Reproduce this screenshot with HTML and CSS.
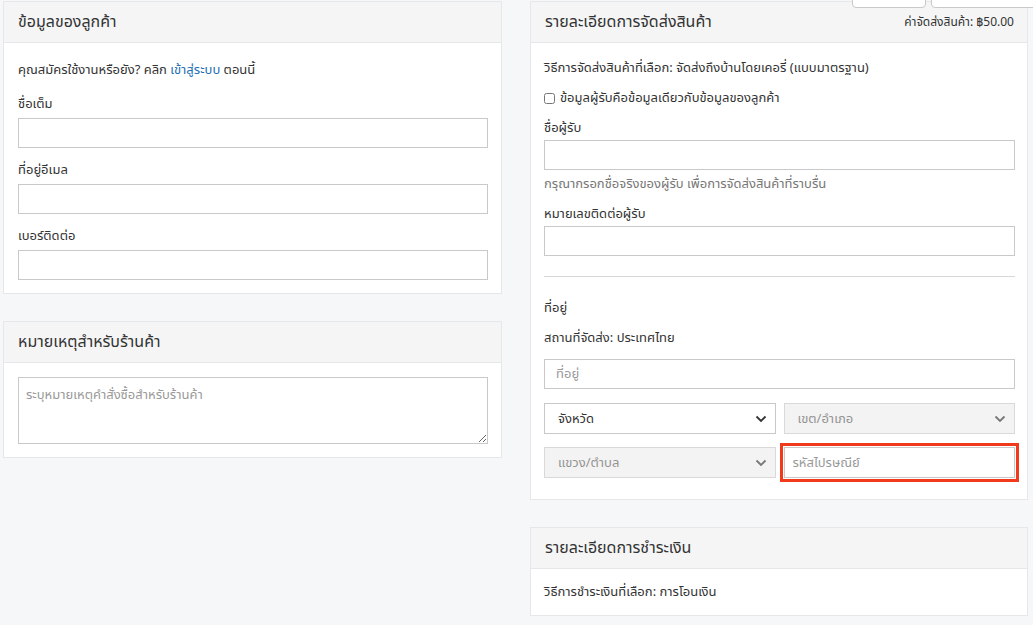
FILE: index.html
```html
<!DOCTYPE html>
<html lang="th">
<head>
    <meta charset="UTF-8">
    <meta name="viewport" content="width=device-width, initial-scale=1.0">
    <title>ข้อมูลการสั่งซื้อ</title>
    <link rel="stylesheet" href="styles.css">
</head>
<body>

    <!-- ปุ่มด้านบน (ถูกตัดขอบ) -->
    <div class="top-btns">
        <button class="top-btn top-btn-a" type="button" aria-label="ย้อนกลับ"></button>
        <button class="top-btn top-btn-b" type="button" aria-label="ดำเนินการต่อ"></button>
    </div>

    <div class="page">

        <!-- คอลัมน์ซ้าย -->
        <div class="col col-l">
            <div class="card">
                <div class="card-head">
                    <h3>ข้อมูลของลูกค้า</h3>
                </div>
                <div class="card-body">
                    <p class="line">คุณสมัครใช้งานหรือยัง? คลิก <a href="#">เข้าสู่ระบบ</a> ตอนนี้</p>

                    <div class="group">
                        <label class="lbl">ชื่อเต็ม</label>
                        <input class="txt" type="text">
                    </div>
                    <div class="group">
                        <label class="lbl">ที่อยู่อีเมล</label>
                        <input class="txt" type="text">
                    </div>
                    <div class="group last">
                        <label class="lbl">เบอร์ติดต่อ</label>
                        <input class="txt" type="text">
                    </div>
                </div>
            </div>

            <div class="card">
                <div class="card-head">
                    <h3>หมายเหตุสำหรับร้านค้า</h3>
                </div>
                <div class="card-body body-note">
                    <textarea class="note" placeholder="ระบุหมายเหตุคำสั่งซื้อสำหรับร้านค้า"></textarea>
                </div>
            </div>
        </div>

        <!-- คอลัมน์ขวา -->
        <div class="col col-r">
            <div class="card">
                <div class="card-head">
                    <h3>รายละเอียดการจัดส่งสินค้า</h3>
                    <span class="fee">ค่าจัดส่งสินค้า: ฿50.00</span>
                </div>
                <div class="card-body body-r">
                    <p class="line">วิธีการจัดส่งสินค้าที่เลือก: จัดส่งถึงบ้านโดยเคอรี่ (แบบมาตรฐาน)</p>

                    <label class="check">
                        <input type="checkbox"> ข้อมูลผู้รับคือข้อมูลเดียวกับข้อมูลของลูกค้า
                    </label>

                    <div class="group-r">
                        <label class="lbl">ชื่อผู้รับ</label>
                        <input class="txt" type="text">
                        <p class="help">กรุณากรอกชื่อจริงของผู้รับ เพื่อการจัดส่งสินค้าที่ราบรื่น</p>
                    </div>

                    <div class="group-r">
                        <label class="lbl">หมายเลขติดต่อผู้รับ</label>
                        <input class="txt" type="text">
                    </div>

                    <hr class="sep">

                    <p class="line addr-title">ที่อยู่</p>
                    <p class="line">สถานที่จัดส่ง: ประเทศไทย</p>

                    <input class="txt addr" type="text" placeholder="ที่อยู่">

                    <div class="grid2">
                        <div class="sel-wrap">
                            <select class="sel">
                                <option>จังหวัด</option>
                            </select>
                            <svg class="chev" width="12" height="8" viewBox="0 0 12 8"><path d="M1.5 1.5 L6 6 L10.5 1.5" fill="none" stroke="#333" stroke-width="1.8"/></svg>
                        </div>
                        <div class="sel-wrap">
                            <select class="sel" disabled>
                                <option>เขต/อำเภอ</option>
                            </select>
                            <svg class="chev" width="12" height="8" viewBox="0 0 12 8"><path d="M1.5 1.5 L6 6 L10.5 1.5" fill="none" stroke="#777" stroke-width="1.8"/></svg>
                        </div>
                        <div class="sel-wrap">
                            <select class="sel" disabled>
                                <option>แขวง/ตำบล</option>
                            </select>
                            <svg class="chev" width="12" height="8" viewBox="0 0 12 8"><path d="M1.5 1.5 L6 6 L10.5 1.5" fill="none" stroke="#777" stroke-width="1.8"/></svg>
                        </div>
                        <input class="txt zip" type="text" placeholder="รหัสไปรษณีย์">
                    </div>
                </div>
            </div>

            <div class="card">
                <div class="card-head">
                    <h3>รายละเอียดการชำระเงิน</h3>
                </div>
                <div class="card-body body-pay">
                    <p class="line">วิธีการชำระเงินที่เลือก: การโอนเงิน</p>
                </div>
            </div>
        </div>

    </div>

</body>
</html>
```

FILE: styles.css
```css
/*初始化*/
*{
    box-sizing: border-box;
}
body{
    margin: 0;
    background-color: #f6f7f9;
    color: #333;
    font-family: "Noto Sans Thai", "Noto Sans", "DejaVu Sans", sans-serif;
    font-size: 13px;
}
p,h3{
    margin: 0;
}

/*1.两栏*/
.page{
    display: flex;
    align-items: flex-start;
    gap: 28px;
    padding: 1px 0 0 3px;
}
.col{
    display: flex;
    flex-direction: column;
    gap: 27px;
}
.col-l{
    width: 499px;
}
.col-r{
    width: 498px;
}

/*2.卡片*/
.card{
    background: #fff;
    border: 1px solid #e6e7e9;
}
.card-head{
    height: 41px;
    background: #f5f5f6;
    border-bottom: 1px solid #e6e7e9;
    padding: 0 13px 0 14px;
    display: flex;
    align-items: center;
    justify-content: space-between;
}
.card-head h3{
    font-size: 16px;
    font-weight: normal;
    color: #333;
}
.fee{
    font-size: 12px;
    color: #333;
}
.card-body{
    padding: 17px 13px 13px 14px;
}
.body-note{
    padding-top: 14px;
    padding-bottom: 13px;
}

.line{
    line-height: 20px;
}
.line a{
    color: #1f6fb2;
    text-decoration: none;
}

/*3.表单*/
.group{
    margin-top: 14px;
}
.group + .group{
    margin-top: 12px;
}
.lbl{
    display: block;
    line-height: 20px;
    margin-bottom: 4px;
}
.txt{
    display: block;
    width: 100%;
    height: 30px;
    border: 1px solid #c9c9c9;
    background: #fff;
    padding: 0 11px;
    font-family: inherit;
    font-size: 13px;
    color: #333;
}
.txt::placeholder{
    color: #999;
}

.note{
    display: block;
    width: 100%;
    height: 67px;
    border: 1px solid #c9c9c9;
    padding: 7px 7px;
    font-family: inherit;
    font-size: 13px;
    resize: vertical;
}
.note::placeholder{
    color: #999;
}

/*4.右边卡片*/
.body-r{
    padding: 15px 12px 21px 13px;
}
.check{
    display: flex;
    align-items: center;
    line-height: 20px;
    margin-top: 10px;
}
.check input{
    width: 11px;
    height: 11px;
    margin: 0 5px 0 0;
}
.group-r{
    margin-top: 11px;
}
.group-r + .group-r{
    margin-top: 12px;
}
.group-r .lbl{
    line-height: 18px;
    margin-bottom: 3px;
}
.help{
    color: #777;
    line-height: 18px;
    margin-top: 5px;
}
.sep{
    border: 0;
    border-top: 1px solid #d8d8d8;
    margin: 20px 0 0;
}
.addr-title{
    margin-top: 21px;
}
.line + .line{
    margin-top: 10px;
}
.addr{
    margin-top: 11px;
}

.grid2{
    display: grid;
    grid-template-columns: 1fr 1fr;
    gap: 13px 8px;
    margin-top: 14px;
}
.sel-wrap{
    position: relative;
}
.sel{
    display: block;
    width: 100%;
    height: 31px;
    border: 1px solid #c9c9c9;
    background: #fff;
    padding: 0 13px;
    font-family: inherit;
    font-size: 13px;
    color: #333;
    appearance: none;
    border-radius: 0;
}
.sel:disabled{
    background: #eee;
    color: #666;
}
/*下拉箭头*/
.chev{
    position: absolute;
    right: 9px;
    top: 12px;
    pointer-events: none;
}
.zip{
    height: 31px;
    padding-left: 8px;
    outline: 3px solid #f03a1b;
    outline-offset: 1px;
}

.body-pay{
    padding: 13px 13px 13px 13px;
}

/*5.顶部按钮*/
.top-btns{
    position: absolute;
    top: -22px;
    left: 852px;
    display: flex;
    gap: 5px;
}
.top-btn{
    height: 30px;
    background: #fff;
    border: 1px solid #c9c9c9;
    border-radius: 4px;
}
.top-btn-a{
    width: 74px;
}
.top-btn-b{
    width: 112px;
}
```
